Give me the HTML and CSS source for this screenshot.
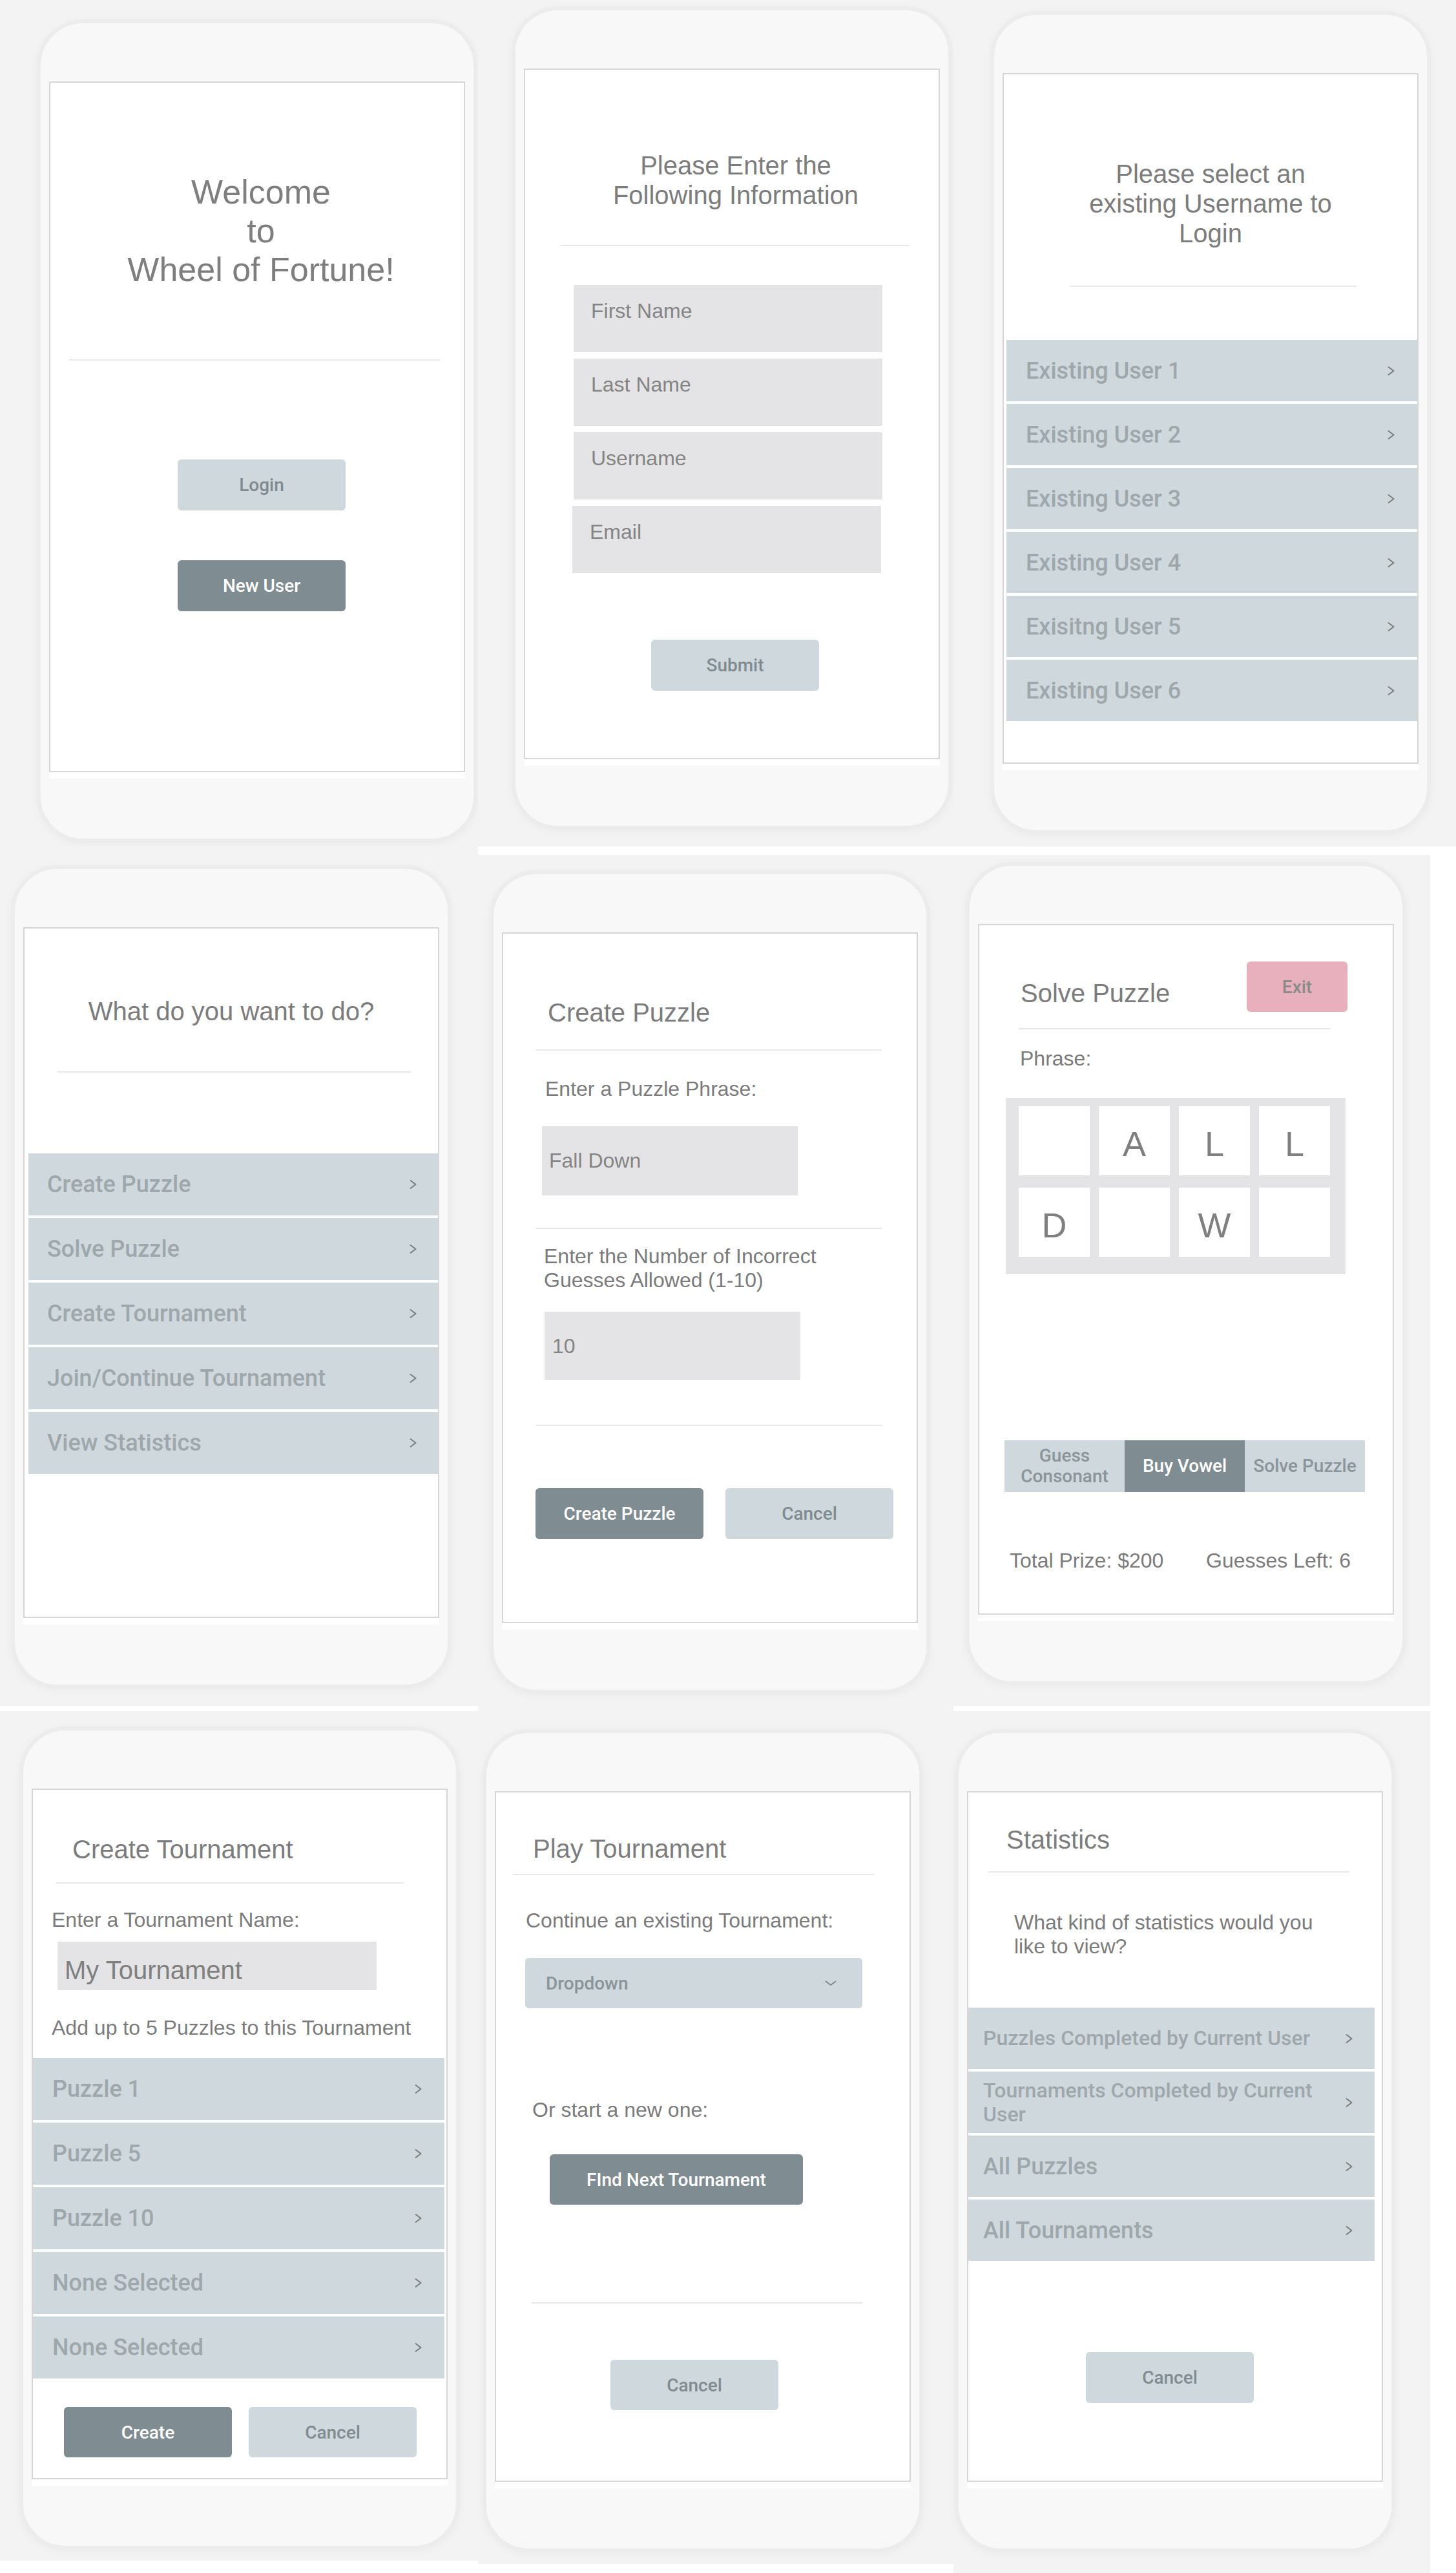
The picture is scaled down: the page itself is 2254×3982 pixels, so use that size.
FILE: index.html
```html
<!DOCTYPE html>
<html lang="en">
<head>
<meta charset="utf-8">
<title>Wheel of Fortune – wireframes</title>
<link rel="stylesheet" href="styles.css">
</head>
<body>
<div class="board">

  <!-- Row 1 -->
  <div class="tile t11">
    <div class="phone">
      <div class="screen-wrap"><div class="screen">
        <div class="welcome">Welcome<br>to<br>Wheel of Fortune!</div>
        <div class="divider dv-1"></div>
        <div class="btn btn-light b1-login">Login</div>
        <div class="btn btn-dark b1-new">New User</div>
      </div></div>
    </div>
  </div>

  <div class="tile t12">
    <div class="phone">
      <div class="screen-wrap"><div class="screen">
        <div class="title-c tc-2">Please Enter the<br>Following Information</div>
        <div class="divider dv-2"></div>
        <div class="field f2 f2-first">First Name</div>
        <div class="field f2">Last Name</div>
        <div class="field f2">Username</div>
        <div class="field f2 f2-email">Email</div>
        <div class="btn btn-light b2-submit">Submit</div>
      </div></div>
    </div>
  </div>

  <div class="tile t13">
    <div class="phone">
      <div class="screen-wrap"><div class="screen">
        <div class="title-c tc-3">Please select an<br>existing Username to<br>Login</div>
        <div class="divider dv-3"></div>
        <div class="list list-3">
          <div class="item item-95"><span>Existing User 1</span><svg class="chev" viewBox="0 0 11 16" width="11" height="16"><polyline points="1.5,2 9.5,8 1.5,14"/></svg></div>
          <div class="item item-95"><span>Existing User 2</span><svg class="chev" viewBox="0 0 11 16" width="11" height="16"><polyline points="1.5,2 9.5,8 1.5,14"/></svg></div>
          <div class="item item-95"><span>Existing User 3</span><svg class="chev" viewBox="0 0 11 16" width="11" height="16"><polyline points="1.5,2 9.5,8 1.5,14"/></svg></div>
          <div class="item item-95"><span>Existing User 4</span><svg class="chev" viewBox="0 0 11 16" width="11" height="16"><polyline points="1.5,2 9.5,8 1.5,14"/></svg></div>
          <div class="item item-95"><span>Exisitng User 5</span><svg class="chev" viewBox="0 0 11 16" width="11" height="16"><polyline points="1.5,2 9.5,8 1.5,14"/></svg></div>
          <div class="item item-95"><span>Existing User 6</span><svg class="chev" viewBox="0 0 11 16" width="11" height="16"><polyline points="1.5,2 9.5,8 1.5,14"/></svg></div>
        </div>
      </div></div>
    </div>
  </div>

  <!-- Row 2 -->
  <div class="tile t21">
    <div class="phone">
      <div class="screen-wrap"><div class="screen">
        <div class="title-c tc-4">What do you want to do?</div>
        <div class="divider dv-4"></div>
        <div class="list list-4">
          <div class="item"><span>Create Puzzle</span><svg class="chev" viewBox="0 0 11 16" width="11" height="16"><polyline points="1.5,2 9.5,8 1.5,14"/></svg></div>
          <div class="item"><span>Solve Puzzle</span><svg class="chev" viewBox="0 0 11 16" width="11" height="16"><polyline points="1.5,2 9.5,8 1.5,14"/></svg></div>
          <div class="item"><span>Create Tournament</span><svg class="chev" viewBox="0 0 11 16" width="11" height="16"><polyline points="1.5,2 9.5,8 1.5,14"/></svg></div>
          <div class="item"><span>Join/Continue Tournament</span><svg class="chev" viewBox="0 0 11 16" width="11" height="16"><polyline points="1.5,2 9.5,8 1.5,14"/></svg></div>
          <div class="item"><span>View Statistics</span><svg class="chev" viewBox="0 0 11 16" width="11" height="16"><polyline points="1.5,2 9.5,8 1.5,14"/></svg></div>
        </div>
      </div></div>
    </div>
  </div>

  <div class="tile t22">
    <div class="phone">
      <div class="screen-wrap"><div class="screen">
        <div class="title-l tl-5">Create Puzzle</div>
        <div class="divider dv-5a"></div>
        <div class="label lb-5a">Enter a Puzzle Phrase:</div>
        <div class="field fc fc-5a">Fall Down</div>
        <div class="divider dv-5b"></div>
        <div class="label lb-5b">Enter the Number of Incorrect<br>Guesses Allowed (1-10)</div>
        <div class="field fc fc-5b">10</div>
        <div class="divider dv-5c"></div>
        <div class="btn-row br-5">
          <div class="btn btn-dark">Create Puzzle</div>
          <div class="btn btn-light">Cancel</div>
        </div>
      </div></div>
    </div>
  </div>

  <div class="tile t23">
    <div class="phone">
      <div class="screen-wrap"><div class="screen">
        <div class="solve-head">
          <div class="title-l tl-6">Solve Puzzle</div>
          <div class="btn btn-exit">Exit</div>
        </div>
        <div class="divider dv-6"></div>
        <div class="label lb-6">Phrase:</div>
        <div class="letters">
          <div class="cell"></div>
          <div class="cell">A</div>
          <div class="cell">L</div>
          <div class="cell">L</div>
          <div class="cell">D</div>
          <div class="cell"></div>
          <div class="cell">W</div>
          <div class="cell"></div>
        </div>
        <div class="seg">
          <div class="seg-light">Guess<br>Consonant</div>
          <div class="seg-dark">Buy Vowel</div>
          <div class="seg-light">Solve Puzzle</div>
        </div>
        <div class="score">
          <span class="score-prize">Total Prize: $200</span>
          <span class="score-left">Guesses Left: 6</span>
        </div>
      </div></div>
    </div>
  </div>

  <!-- Row 3 -->
  <div class="tile t31">
    <div class="phone">
      <div class="screen-wrap"><div class="screen">
        <div class="title-l tl-7">Create Tournament</div>
        <div class="divider dv-7"></div>
        <div class="label lb-7a">Enter a Tournament Name:</div>
        <div class="field f7">My Tournament</div>
        <div class="label lb-7b">Add up to 5 Puzzles to this Tournament</div>
        <div class="list list-7">
          <div class="item"><span>Puzzle 1</span><svg class="chev" viewBox="0 0 11 16" width="11" height="16"><polyline points="1.5,2 9.5,8 1.5,14"/></svg></div>
          <div class="item"><span>Puzzle 5</span><svg class="chev" viewBox="0 0 11 16" width="11" height="16"><polyline points="1.5,2 9.5,8 1.5,14"/></svg></div>
          <div class="item"><span>Puzzle 10</span><svg class="chev" viewBox="0 0 11 16" width="11" height="16"><polyline points="1.5,2 9.5,8 1.5,14"/></svg></div>
          <div class="item"><span>None Selected</span><svg class="chev" viewBox="0 0 11 16" width="11" height="16"><polyline points="1.5,2 9.5,8 1.5,14"/></svg></div>
          <div class="item"><span>None Selected</span><svg class="chev" viewBox="0 0 11 16" width="11" height="16"><polyline points="1.5,2 9.5,8 1.5,14"/></svg></div>
        </div>
        <div class="btn-row br-7">
          <div class="btn btn-dark">Create</div>
          <div class="btn btn-light">Cancel</div>
        </div>
      </div></div>
    </div>
  </div>

  <div class="tile t32">
    <div class="phone">
      <div class="screen-wrap"><div class="screen">
        <div class="title-l tl-8">Play Tournament</div>
        <div class="divider dv-8a"></div>
        <div class="label lb-8a">Continue an existing Tournament:</div>
        <div class="dropdown">
          <span>Dropdown</span>
          <svg class="caret" viewBox="0 0 18 9" width="18" height="9"><polyline points="1.5,1.5 9,7 16.5,1.5"/></svg>
        </div>
        <div class="label lb-8b">Or start a new one:</div>
        <div class="btn btn-dark b8-find">FInd Next Tournament</div>
        <div class="divider dv-8b"></div>
        <div class="btn btn-light b8-cancel">Cancel</div>
      </div></div>
    </div>
  </div>

  <div class="tile t33">
    <div class="phone">
      <div class="screen-wrap"><div class="screen">
        <div class="title-l tl-9">Statistics</div>
        <div class="divider dv-9"></div>
        <div class="label lb-9">What kind of statistics would you<br>like to view?</div>
        <div class="list list-9">
          <div class="item item-95 item-sm"><span>Puzzles Completed by Current User</span><svg class="chev" viewBox="0 0 11 16" width="11" height="16"><polyline points="1.5,2 9.5,8 1.5,14"/></svg></div>
          <div class="item item-95 item-sm"><span>Tournaments Completed by Current<br>User</span><svg class="chev" viewBox="0 0 11 16" width="11" height="16"><polyline points="1.5,2 9.5,8 1.5,14"/></svg></div>
          <div class="item item-95"><span>All Puzzles</span><svg class="chev" viewBox="0 0 11 16" width="11" height="16"><polyline points="1.5,2 9.5,8 1.5,14"/></svg></div>
          <div class="item item-95"><span>All Tournaments</span><svg class="chev" viewBox="0 0 11 16" width="11" height="16"><polyline points="1.5,2 9.5,8 1.5,14"/></svg></div>
        </div>
        <div class="btn btn-light b9-cancel">Cancel</div>
      </div></div>
    </div>
  </div>

</div>
</body>
</html>
```

FILE: styles.css
```css
html, body {
  margin: 0;
  padding: 0;
  background: #ffffff;
}

body {
  width: 2254px;
  height: 3982px;
  overflow: hidden;
  font-family: "Liberation Sans", Arial, sans-serif;
  color: #7b7b7b;
}

/* ---------- collage board ---------- */
.board {
  display: grid;
  grid-template-columns: 740px 736px 778px;
  grid-template-rows: 1310px 1330px 1342px;
  background: #ffffff;
}

.tile {
  background: #f3f3f3;
  box-sizing: border-box;
  min-width: 0;
  min-height: 0;
}

.t11 { padding: 30px 0 0 57px; }
.t12 { padding: 10px 0 0 52px; }
.t13 { padding: 17px 0 0 57px; }
.t21 { padding: 29px 0 0 17px; }
.t22 { padding: 24px 0 0 18px; margin-top: 13px; }
.t23 { padding: 11px 0 0 19px; margin-top: 13px; margin-right: 40px; }
.t31 { padding: 24px 0 0 30px; margin-top: 8px; margin-bottom: 19px; }
.t32 { padding: 36px 0 0 7px; margin-bottom: 14px; }
.t33 { padding: 28px 0 0 2px; margin-top: 8px; margin-right: 40px; }

/* ---------- phone shell ---------- */
.phone {
  box-sizing: border-box;
  width: 682px;
  height: 1274px;
  padding: 90px 13px 0 13px;
  background: #f8f8f8;
  border: 6px solid #ececec;
  border-radius: 72px;
  box-shadow: 0 3px 14px rgba(0, 0, 0, 0.035);
}

.screen-wrap {
  background: #ffffff;
  padding-bottom: 10px;
}

.screen {
  box-sizing: border-box;
  height: 1069px;
  border: 2px solid #d6d6d6;
  background: #ffffff;
  overflow: hidden;
}

/* ---------- text ---------- */
.welcome {
  margin-top: 139px;
  padding-left: 12px;
  font-size: 52px;
  line-height: 60px;
  text-align: center;
  color: #7e7e7e;
}

.title-c {
  font-size: 40px;
  line-height: 46px;
  text-align: center;
  color: #7c7c7c;
}

.tc-2 { margin-top: 125px; padding-left: 12px; }
.tc-3 { margin-top: 131px; }
.tc-4 { margin-top: 105px; }

.title-l {
  font-size: 40px;
  line-height: 46px;
  color: #7c7c7c;
}

.tl-5 { margin-top: 99px; margin-left: 69px; }
.tl-7 { margin-top: 69px; margin-left: 61px; }
.tl-8 { margin-top: 64px; margin-left: 57px; }
.tl-9 { margin-top: 50px; margin-left: 59px; }

.label {
  font-size: 32px;
  line-height: 37px;
  color: #7b7b7b;
}

.lb-5a { margin-top: 41px; margin-left: 65px; }
.lb-5b { margin-top: 24px; margin-left: 63px; }
.lb-6 { margin-top: 27px; margin-left: 63px; }
.lb-7a { margin-top: 38px; margin-left: 29px; }
.lb-7b { margin-top: 40px; margin-left: 29px; }
.lb-8a { margin-top: 52px; margin-left: 46px; }
.lb-8b { margin-top: 139px; margin-left: 56px; }
.lb-9 { margin-top: 59px; margin-left: 71px; }

/* ---------- dividers ---------- */
.divider {
  height: 2px;
  background: #e7e7e7;
}

.dv-1 { margin-top: 109px; margin-left: 29px; width: 574px; }
.dv-2 { margin-top: 54px; margin-left: 55px; width: 540px; }
.dv-3 { margin-top: 58px; margin-left: 102px; width: 444px; }
.dv-4 { margin-top: 70px; margin-left: 50px; width: 548px; }
.dv-5a { margin-top: 34px; margin-left: 50px; width: 536px; }
.dv-5b { margin-top: 50px; margin-left: 50px; width: 536px; }
.dv-5c { margin-top: 69px; margin-left: 50px; width: 536px; }
.dv-6 { margin-top: 25px; margin-left: 61px; width: 482px; }
.dv-7 { margin-top: 28px; margin-left: 36px; width: 538px; }
.dv-8a { margin-top: 16px; margin-left: 26px; width: 559px; }
.dv-8b { margin-top: 151px; margin-left: 55px; width: 512px; }
.dv-9 { margin-top: 26px; margin-left: 31px; width: 559px; }

/* ---------- buttons ---------- */
.btn {
  box-sizing: border-box;
  display: flex;
  align-items: center;
  justify-content: center;
  width: 260px;
  height: 79px;
  border-radius: 6px;
  font-family: Roboto, "Liberation Sans", sans-serif;
  font-weight: 500;
  font-size: 28px;
}

.btn-light {
  background: #cfd8dc;
  color: #7f8b91;
}

.btn-dark {
  background: #7f8c92;
  color: #ffffff;
}

.b1-login { margin-top: 153px; margin-left: 197px; }
.b1-new { margin-top: 77px; margin-left: 197px; }
.b2-submit { margin-top: 103px; margin-left: 195px; }
.b8-find { margin-top: 50px; margin-left: 83px; width: 392px; height: 78px; }
.b8-cancel { margin-top: 87px; margin-left: 177px; height: 78px; }
.b9-cancel { margin-top: 141px; margin-left: 182px; }

.btn-row {
  display: flex;
}

.br-5 { margin-top: 96px; margin-left: 50px; gap: 34px; }
.br-7 { margin-top: 44px; margin-left: 48px; gap: 26px; }
.br-7 .btn { height: 78px; }

.btn-exit {
  width: 156px;
  height: 78px;
  margin-left: auto;
  margin-right: 70px;
  background: #e8afbc;
  color: #8a8a8a;
}

/* ---------- form fields ---------- */
.field {
  box-sizing: border-box;
  background: #e4e4e6;
  color: #848484;
  font-size: 32px;
  line-height: 37px;
}

.f2 {
  width: 478px;
  height: 104px;
  margin-top: 10px;
  margin-left: 75px;
  padding: 22px 27px 0;
}

.f2-first { margin-top: 60px; }
.f2-email { margin-left: 73px; }

.fc {
  width: 396px;
  display: flex;
  align-items: center;
}

.fc-5a { margin-top: 39px; margin-left: 60px; height: 107px; padding-left: 11px; }
.fc-5b { margin-top: 30px; margin-left: 64px; height: 106px; padding-left: 12px; }

.f7 {
  width: 494px;
  height: 75px;
  margin-top: 15px;
  margin-left: 38px;
  padding: 21px 0 0 11px;
  font-size: 40px;
  line-height: 46px;
  color: #7f7f7f;
}

.dropdown {
  box-sizing: border-box;
  display: flex;
  align-items: center;
  justify-content: space-between;
  width: 522px;
  height: 78px;
  margin-top: 39px;
  margin-left: 45px;
  padding: 0 40px 0 32px;
  border-radius: 6px;
  background: #cfd8dc;
  font-family: Roboto, "Liberation Sans", sans-serif;
  font-weight: 500;
  font-size: 28px;
  color: #8a9499;
}

.caret polyline {
  fill: none;
  stroke: #7d888d;
  stroke-width: 2;
  stroke-linecap: round;
  stroke-linejoin: round;
}

/* ---------- lists ---------- */
.list {
  display: flex;
  flex-direction: column;
  gap: 4px;
}

.list-3 { margin-top: 82px; margin-left: 4px; }
.list-4 { margin-top: 125px; margin-left: 6px; }
.list-7 { margin-top: 28px; margin-right: 3px; }
.list-9 { margin-top: 76px; margin-right: 11px; }

.item {
  box-sizing: border-box;
  display: flex;
  align-items: center;
  justify-content: space-between;
  height: 96px;
  padding: 0 35px 0 30px;
  background: #cfd8dc;
  font-family: Roboto, "Liberation Sans", sans-serif;
  font-weight: 500;
  font-size: 36px;
  color: #9ea7ab;
}

.item-95 { height: 95px; }

.list-4 .item { padding-left: 29px; padding-right: 33px; }
.list-9 .item { padding-left: 23px; padding-right: 34px; }

.item-sm {
  font-size: 32px;
  line-height: 37px;
}

.chev {
  flex: none;
}

.chev polyline {
  fill: none;
  stroke: #7b7b7b;
  stroke-width: 2;
  stroke-linecap: round;
  stroke-linejoin: round;
}

/* ---------- solve puzzle ---------- */
.solve-head {
  display: flex;
  align-items: flex-start;
  margin-top: 56px;
  height: 78px;
}

.tl-6 {
  margin-top: 26px;
  margin-left: 64px;
}

.letters {
  box-sizing: border-box;
  display: grid;
  grid-template-columns: repeat(4, 110px);
  grid-auto-rows: 107px;
  column-gap: 14px;
  row-gap: 19px;
  width: 526px;
  height: 273px;
  margin-top: 42px;
  margin-left: 41px;
  padding: 13px 24px 28px 20px;
  background: #e4e4e6;
}

.cell {
  display: flex;
  align-items: center;
  justify-content: center;
  padding-top: 8px;
  box-sizing: border-box;
  background: #ffffff;
  font-size: 54px;
  color: #7f7f7f;
}

.seg {
  display: flex;
  width: 558px;
  height: 80px;
  margin-top: 257px;
  margin-left: 39px;
  font-family: Roboto, "Liberation Sans", sans-serif;
  font-weight: 500;
  font-size: 28px;
  line-height: 32px;
  text-align: center;
}

.seg > div {
  flex: 1;
  display: flex;
  align-items: center;
  justify-content: center;
}

.seg-light {
  background: #cfd8dc;
  color: #8a9499;
}

.seg-dark {
  background: #7f8c92;
  color: #ffffff;
}

.score {
  display: flex;
  margin-top: 88px;
  margin-left: 47px;
  font-size: 32px;
  line-height: 37px;
  color: #7b7b7b;
  white-space: nowrap;
}

.score-prize {
  flex: none;
  width: 304px;
}

.score-left {
  flex: none;
}
```
